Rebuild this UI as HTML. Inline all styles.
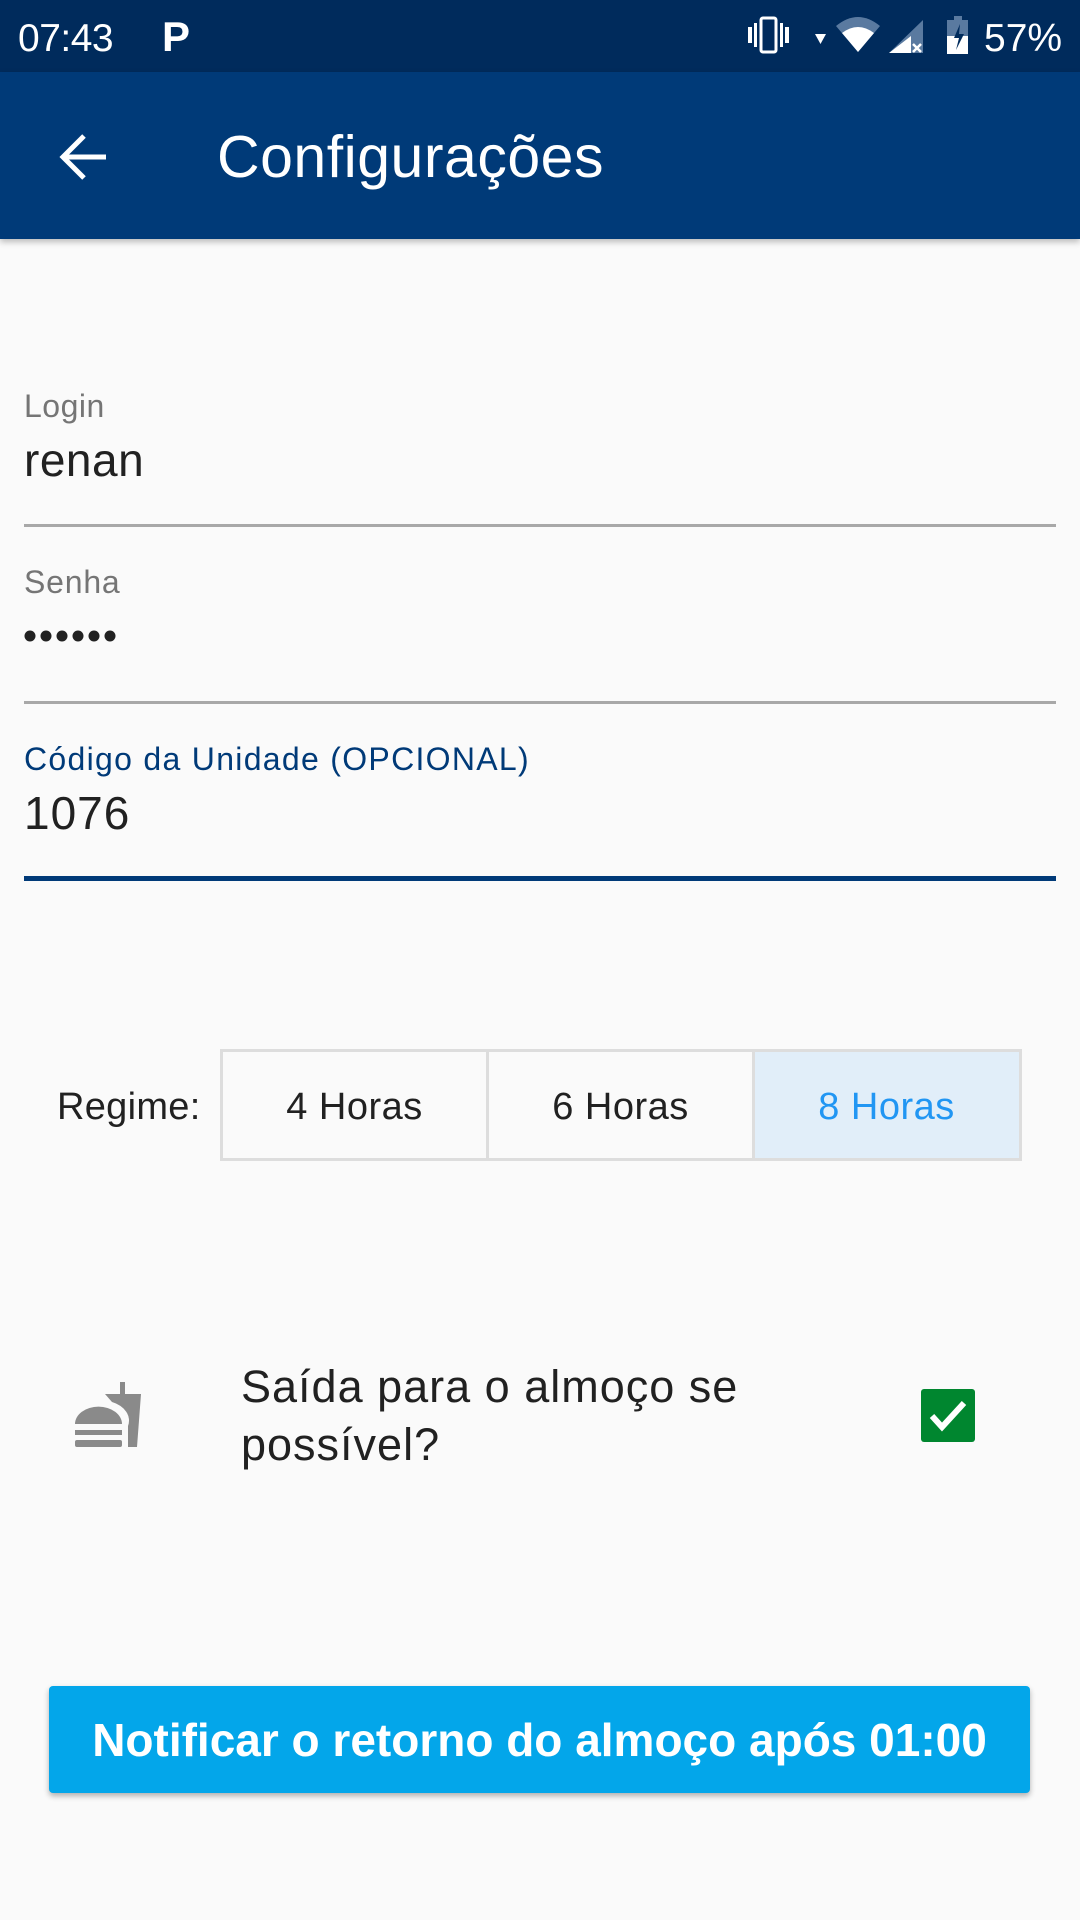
<!DOCTYPE html>
<html><head><meta charset="utf-8"><style>
*{margin:0;padding:0;box-sizing:border-box}
body{width:1080px;height:1920px;background:#fafafa;font-family:"Liberation Sans",sans-serif;position:relative;overflow:hidden}
.a{position:absolute;white-space:nowrap;line-height:1}
</style></head><body>
<div class="a" style="left:0;top:0;width:1080px;height:72px;background:#002b5c"></div>
<div class="a" style="left:0;top:72px;width:1080px;height:167px;background:#003a78;box-shadow:0 3px 6px rgba(0,0,0,.25)"></div>
<div class="a" style="left:18px;top:19px;font-size:39px;color:#fff;letter-spacing:-0.5px">07:43</div>
<div class="a" style="left:162px;top:16px;font-size:42px;color:#fff;font-weight:bold">P</div>
<div class="a" style="left:984px;top:19px;font-size:39px;color:#fff">57%</div>
<svg class="a" style="left:0;top:0" width="1080" height="72">
<rect x="761" y="18" width="15" height="34" rx="2" fill="none" stroke="#fff" stroke-width="3"/>
<rect x="748" y="27" width="4" height="16" fill="#fff"/><rect x="754" y="23" width="3" height="24" fill="#fff"/>
<rect x="780" y="23" width="3" height="24" fill="#fff"/><rect x="785" y="27" width="4" height="16" fill="#fff"/>
<path d="M815 34h11l-5.5 10z" fill="#fff"/>
<path d="M836 26Q858 8 880 26L858 52z" fill="#5a7aa0"/>
<path d="M842 33Q858 21 874 33L858 52z" fill="#fff"/>
<path d="M923 20V53H889z" fill="#5a7aa0"/><path d="M911 36V53H889L911 36z" fill="#fff"/>
<path d="M913 44l8 8M921 44l-8 8" stroke="#fff" stroke-width="2.5"/>
<rect x="954" y="16" width="8" height="4" fill="#5a7aa0"/>
<rect x="947" y="20" width="21" height="34" fill="#5a7aa0"/><rect x="947" y="36" width="21" height="18" fill="#fff"/>
<path d="M960 24l-6 14h5l-3 12 8-16h-5z" fill="#002b5c"/>
</svg>
<svg class="a" style="left:0;top:72px" width="200" height="167">
<path d="M106 85H66M84 64L63 85l21 21" stroke="#fff" stroke-width="5" fill="none"/>
</svg>
<div class="a" style="left:217px;top:128px;font-size:59px;color:#fff;letter-spacing:0.5px">Configurações</div>

<div class="a" style="left:24px;top:390px;font-size:32px;color:#757575;letter-spacing:0.5px">Login</div>
<div class="a" style="left:24px;top:437px;font-size:46px;color:#212121;letter-spacing:0.5px">renan</div>
<div class="a" style="left:24px;top:524px;width:1032px;height:3px;background:#a8a8a8"></div>
<div class="a" style="left:24px;top:566px;font-size:32px;color:#757575;letter-spacing:0.8px">Senha</div>
<svg class="a" style="left:24px;top:624px" width="100" height="24">
<g fill="#212121"><circle cx="6" cy="12" r="5.5"/><circle cx="22" cy="12" r="5.5"/><circle cx="38" cy="12" r="5.5"/><circle cx="54" cy="12" r="5.5"/><circle cx="70" cy="12" r="5.5"/><circle cx="86" cy="12" r="5.5"/></g>
</svg>
<div class="a" style="left:24px;top:701px;width:1032px;height:3px;background:#a8a8a8"></div>
<div class="a" style="left:24px;top:743px;font-size:32px;color:#003a78;letter-spacing:1.3px">Código da Unidade (OPCIONAL)</div>
<div class="a" style="left:24px;top:790px;font-size:46px;color:#212121;letter-spacing:1px">1076</div>
<div class="a" style="left:24px;top:876px;width:1032px;height:5px;background:#003a78"></div>

<div class="a" style="left:57px;top:1088px;font-size:38px;color:#212121;letter-spacing:0.3px">Regime:</div>
<div class="a" style="left:220px;top:1049px;width:802px;height:112px;border:3px solid #ddd;background:#fafafa"></div>
<div class="a" style="left:753px;top:1052px;width:266px;height:106px;background:#e1eef9"></div>
<div class="a" style="left:486px;top:1052px;width:3px;height:106px;background:#ddd"></div>
<div class="a" style="left:752px;top:1052px;width:3px;height:106px;background:#ddd"></div>
<div class="a" style="left:222px;top:1088px;width:265px;text-align:center;font-size:38px;color:#212121;letter-spacing:0.5px">4 Horas</div>
<div class="a" style="left:488px;top:1088px;width:265px;text-align:center;font-size:38px;color:#212121;letter-spacing:0.5px">6 Horas</div>
<div class="a" style="left:754px;top:1088px;width:265px;text-align:center;font-size:38px;color:#2196f3;letter-spacing:0.5px">8 Horas</div>

<svg class="a" style="left:0;top:1370px" width="200" height="90">
<path d="M75 54a23 17 0 0 1 47 0z" fill="#8a8a8a"/>
<rect x="75" y="60" width="47" height="5" fill="#8a8a8a"/>
<rect x="75" y="70" width="47" height="7" rx="2" fill="#8a8a8a"/>
<rect x="120" y="12" width="5" height="14" fill="#8a8a8a"/>
<path d="M105 24H141L137 77H128V56A27 20 0 0 0 112 32z" fill="#8a8a8a"/>
</svg>
<div class="a" style="left:241px;top:1358px;font-size:45px;color:#212121;line-height:58px;letter-spacing:1px">Saída para o almoço se<br>possível?</div>
<div class="a" style="left:921px;top:1389px;width:54px;height:53px;background:#00862f;border-radius:3px"></div>
<svg class="a" style="left:921px;top:1389px" width="54" height="53"><path d="M11 27l10 11 22-24" stroke="#fff" stroke-width="6" fill="none"/></svg>

<div class="a" style="left:49px;top:1686px;width:981px;height:107px;background:#03a6ea;border-radius:4px;box-shadow:0 3px 6px rgba(0,0,0,.3)"></div>
<div class="a" style="left:49px;top:1717px;width:981px;text-align:center;font-size:46px;font-weight:bold;color:#fff;letter-spacing:0px">Notificar o retorno do almoço após 01:00</div>
</body></html>
